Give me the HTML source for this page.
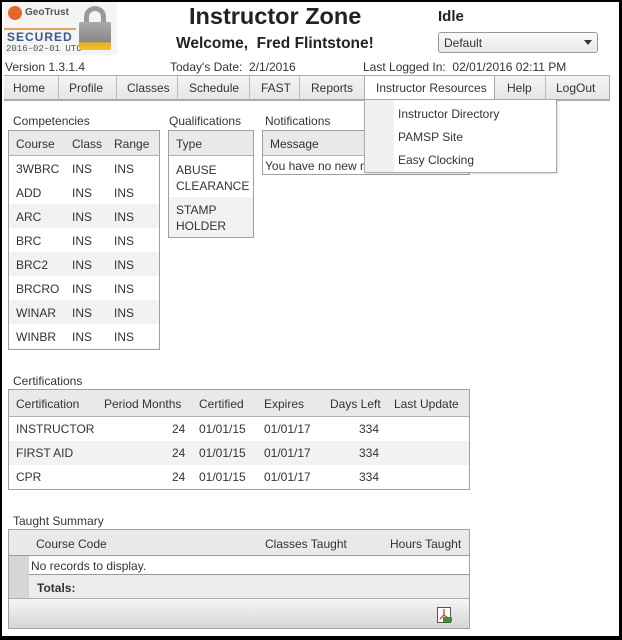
<!DOCTYPE html>
<html><head><meta charset="utf-8"><style>
*{margin:0;padding:0;box-sizing:border-box}
html,body{width:622px;height:640px;background:#000;overflow:hidden}
body{position:relative;font-family:"Liberation Sans",sans-serif;font-size:12px;color:#333}
#pg{position:absolute;left:2px;top:2px;width:617px;height:634px;background:#fff}
.a{position:absolute;white-space:nowrap}
.t{position:absolute;border:1px solid #a0a0a0;background:#fff;overflow:hidden}
.r{position:absolute;left:0;right:0}
.h{background:#e9e9e9;border-bottom:1px solid #b0b0b0}
.g{background:#f2f2f2}
.c{position:absolute;white-space:nowrap}
.lbl{position:absolute;font-size:12px;color:#333}
</style></head><body>
<div id="pg"></div>
<!-- logo -->
<div class="a" style="left:4px;top:2px;width:113px;height:53px;background:#f4f4f4;border-radius:2px"></div>
<div class="a" style="left:8px;top:6px;width:14px;height:14px;border-radius:7px;background:#e8642a"></div>
<div class="a" style="left:25px;top:7px;font-size:10px;color:#555;font-weight:bold">GeoTrust</div>
<div class="a" style="left:4px;top:28px;width:72px;height:2px;background:#e8a060"></div>
<div class="a" style="left:7px;top:30px;font-size:12px;color:#3a5a8a;font-weight:bold;letter-spacing:1px">SECURED</div>
<div class="a" style="left:6px;top:44px;font-family:'Liberation Mono',monospace;font-size:9px;color:#555">2016-02-01 UTC</div>
<div class="a" style="left:84px;top:6px;width:22px;height:24px;border:5px solid #999;border-bottom:none;border-radius:11px 11px 0 0"></div>
<div class="a" style="left:79px;top:22px;width:32px;height:28px;background:linear-gradient(#aaa,#888 70%,#e8b020 75%,#f0c030);border-radius:2px"></div>
<!-- header text -->
<div class="a" style="left:189px;top:3px;font-size:23.5px;font-weight:bold;color:#222">Instructor Zone</div>
<div class="a" style="left:176px;top:35px;font-size:15.5px;font-weight:bold;color:#222">Welcome,&nbsp; Fred Flintstone!</div>
<div class="a" style="left:438px;top:8px;font-size:15px;font-weight:bold;color:#222">Idle</div>
<div class="a" style="left:438px;top:32px;width:160px;height:21px;border:1px solid #999;border-radius:3px;background:linear-gradient(#fafafa,#e8e8e8)"></div>
<div class="a" style="left:444px;top:36px;color:#333">Default</div>
<div class="a" style="left:584px;top:40px;width:0;height:0;border-left:4px solid transparent;border-right:4px solid transparent;border-top:5px solid #333"></div>
<div class="a" style="left:5px;top:60px">Version 1.3.1.4</div>
<div class="a" style="left:170px;top:60px">Today's Date:&nbsp; 2/1/2016</div>
<div class="a" style="left:363px;top:60px">Last Logged In:&nbsp; 02/01/2016 02:11 PM</div>
<!-- nav -->
<div class="a" style="left:4px;top:75px;width:606px;height:26px;border-top:1px solid #aaa;border-bottom:2px solid #aaa;background:linear-gradient(#f4f4f4,#e6e6e6)"></div>
<div class="a" style="left:364px;top:76px;width:130px;height:24px;background:#fff"></div>
<div class="a" style="left:609px;top:76px;width:1px;height:24px;background:#aaa"></div>
<div class="a" style="left:58px;top:76px;width:1px;height:24px;background:#bbb"></div>
<div class="a" style="left:116px;top:76px;width:1px;height:24px;background:#bbb"></div>
<div class="a" style="left:177px;top:76px;width:1px;height:24px;background:#bbb"></div>
<div class="a" style="left:249px;top:76px;width:1px;height:24px;background:#bbb"></div>
<div class="a" style="left:299px;top:76px;width:1px;height:24px;background:#bbb"></div>
<div class="a" style="left:364px;top:76px;width:1px;height:24px;background:#aaa"></div>
<div class="a" style="left:494px;top:76px;width:1px;height:24px;background:#aaa"></div>
<div class="a" style="left:545px;top:76px;width:1px;height:24px;background:#bbb"></div>
<div class="a" style="left:13px;top:81px">Home</div>
<div class="a" style="left:69px;top:81px">Profile</div>
<div class="a" style="left:127px;top:81px">Classes</div>
<div class="a" style="left:189px;top:81px">Schedule</div>
<div class="a" style="left:261px;top:81px">FAST</div>
<div class="a" style="left:311px;top:81px">Reports</div>
<div class="a" style="left:376px;top:81px">Instructor Resources</div>
<div class="a" style="left:507px;top:81px">Help</div>
<div class="a" style="left:556px;top:81px">LogOut</div>

<!-- Competencies -->
<div class="lbl" style="left:13px;top:114px">Competencies</div>
<div class="t" style="left:8px;top:130px;width:152px;height:220px">
 <div class="r h" style="top:0;height:25px"></div>
 <div class="r g" style="top:73px;height:24px"></div>
 <div class="r g" style="top:121px;height:24px"></div>
 <div class="r g" style="top:169px;height:24px"></div>
 <div class="r g" style="top:217px;height:24px"></div>
 <div class="c" style="left:7px;top:6px">Course</div><div class="c" style="left:63px;top:6px">Class</div><div class="c" style="left:105px;top:6px">Range</div>
 <div class="c" style="left:7px;top:31px">3WBRC</div><div class="c" style="left:63px;top:31px">INS</div><div class="c" style="left:105px;top:31px">INS</div>
 <div class="c" style="left:7px;top:55px">ADD</div><div class="c" style="left:63px;top:55px">INS</div><div class="c" style="left:105px;top:55px">INS</div>
 <div class="c" style="left:7px;top:79px">ARC</div><div class="c" style="left:63px;top:79px">INS</div><div class="c" style="left:105px;top:79px">INS</div>
 <div class="c" style="left:7px;top:103px">BRC</div><div class="c" style="left:63px;top:103px">INS</div><div class="c" style="left:105px;top:103px">INS</div>
 <div class="c" style="left:7px;top:127px">BRC2</div><div class="c" style="left:63px;top:127px">INS</div><div class="c" style="left:105px;top:127px">INS</div>
 <div class="c" style="left:7px;top:151px">BRCRO</div><div class="c" style="left:63px;top:151px">INS</div><div class="c" style="left:105px;top:151px">INS</div>
 <div class="c" style="left:7px;top:175px">WINAR</div><div class="c" style="left:63px;top:175px">INS</div><div class="c" style="left:105px;top:175px">INS</div>
 <div class="c" style="left:7px;top:199px">WINBR</div><div class="c" style="left:63px;top:199px">INS</div><div class="c" style="left:105px;top:199px">INS</div>
</div>
<div class="a" style="left:8px;top:155px;width:152px;height:1px;background:#b0b0b0"></div>

<!-- Qualifications -->
<div class="lbl" style="left:169px;top:114px">Qualifications</div>
<div class="t" style="left:168px;top:130px;width:86px;height:108px">
 <div class="r h" style="top:0;height:25px"></div>
 <div class="r g" style="top:66px;height:41px"></div>
 <div class="c" style="left:7px;top:6px">Type</div>
 <div class="c" style="left:7px;top:31px;line-height:16px">ABUSE<br>CLEARANCE</div>
 <div class="c" style="left:7px;top:71px;line-height:16px">STAMP<br>HOLDER</div>
</div>

<!-- Notifications -->
<div class="lbl" style="left:265px;top:114px">Notifications</div>
<div class="t" style="left:262px;top:130px;width:208px;height:45px">
 <div class="r h" style="top:0;height:25px"></div>
 <div class="c" style="left:7px;top:6px">Message</div>
 <div class="c" style="left:2px;top:28px">You have no new messages</div>
</div>

<!-- dropdown -->
<div class="a" style="left:364px;top:99px;width:193px;height:74px;border:1px solid #aaa;background:#fff;box-shadow:1px 1px 2px rgba(0,0,0,.15)"></div>
<div class="a" style="left:365px;top:100px;width:29px;height:72px;background:#f0f0f0"></div>
<div class="a" style="left:398px;top:107px">Instructor Directory</div>
<div class="a" style="left:398px;top:130px">PAMSP Site</div>
<div class="a" style="left:398px;top:153px">Easy Clocking</div>

<!-- Certifications -->
<div class="lbl" style="left:13px;top:374px">Certifications</div>
<div class="t" style="left:8px;top:389px;width:462px;height:101px">
 <div class="r h" style="top:0;height:27px"></div>
 <div class="r g" style="top:51px;height:24px"></div>
 <div class="c" style="left:7px;top:7px">Certification</div><div class="c" style="left:95px;top:7px">Period Months</div><div class="c" style="left:190px;top:7px">Certified</div><div class="c" style="left:255px;top:7px">Expires</div><div class="c" style="left:321px;top:7px">Days Left</div><div class="c" style="left:385px;top:7px">Last Update</div>
 <div class="c" style="left:7px;top:32px">INSTRUCTOR</div><div class="c" style="left:163px;top:32px">24</div><div class="c" style="left:190px;top:32px">01/01/15</div><div class="c" style="left:255px;top:32px">01/01/17</div><div class="c" style="left:350px;top:32px">334</div>
 <div class="c" style="left:7px;top:56px">FIRST AID</div><div class="c" style="left:163px;top:56px">24</div><div class="c" style="left:190px;top:56px">01/01/15</div><div class="c" style="left:255px;top:56px">01/01/17</div><div class="c" style="left:350px;top:56px">334</div>
 <div class="c" style="left:7px;top:80px">CPR</div><div class="c" style="left:163px;top:80px">24</div><div class="c" style="left:190px;top:80px">01/01/15</div><div class="c" style="left:255px;top:80px">01/01/17</div><div class="c" style="left:350px;top:80px">334</div>
</div>

<!-- Taught Summary -->
<div class="lbl" style="left:13px;top:514px">Taught Summary</div>
<div class="t" style="left:8px;top:529px;width:462px;height:100px">
 <div class="r h" style="top:0;height:26px;border-bottom:1px solid #999"></div>
 <div class="r" style="top:44px;height:24px;background:#ececec;border-top:1px solid #999"></div>
 <div class="c" style="left:0;top:26px;width:20px;height:42px;background:#d6d6d6"></div>
 <div class="r" style="top:68px;height:31px;border-top:1px solid #aaa;background:linear-gradient(#f6f6f6,#d4d4d4)"></div>
 <div class="c" style="left:27px;top:7px">Course Code</div><div class="c" style="left:256px;top:7px">Classes Taught</div><div class="c" style="left:381px;top:7px">Hours Taught</div>
 <div class="c" style="left:22px;top:29px">No records to display.</div>
 <div class="c" style="left:28px;top:51px;font-weight:bold">Totals:</div>
 <div class="c" style="left:428px;top:77px;width:14px;height:16px;border:1px solid #555;background:#fff"></div>
 <svg class="c" style="left:429px;top:78px" width="12" height="14" viewBox="0 0 12 14"><path d="M6 1 L6 7 L2 11 M6 7 L10 10" stroke="#e33" stroke-width="1.3" fill="none"/></svg>
 <div class="c" style="left:434px;top:87px;width:9px;height:5px;background:#2a9a3a"></div>
</div>
</body></html>
